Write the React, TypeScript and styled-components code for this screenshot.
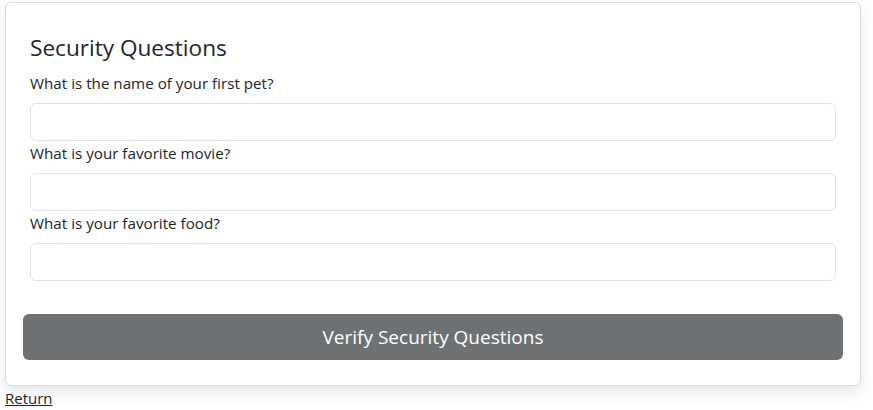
import React from "react";
import styled, { createGlobalStyle } from "styled-components";

const Global = createGlobalStyle`
  html, body { margin: 0; padding: 0; background: #fff; }
  body {
    font-family: "Open Sans", "Noto Sans", sans-serif;
    color: #212529;
    font-size: 15px;
  }
`;

const Page = styled.div`
  padding: 2px 12px 0 5px;
  display: flex;
  flex-direction: column;
  align-items: stretch;
`;

const Card = styled.div`
  border: 1px solid #dcdcdc;
  border-radius: 6px;
  background: #fff;
  box-shadow: 0 6px 14px rgba(0, 0, 0, 0.1);
  display: flex;
  flex-direction: column;
  padding: 0 17px 25px 17px;
`;

const Body = styled.div`
  padding: 30px 7px 0 7px;
  display: flex;
  flex-direction: column;
`;

const Title = styled.h4`
  margin: 0 0 9px 0;
  font-size: 22.6px;
  font-weight: 400;
  line-height: 29px;
`;

const Label = styled.label`
  display: block;
  font-size: 15.2px;
  line-height: 24px;
  margin-bottom: 8px;
`;

const Input = styled.input<{ $last?: boolean }>`
  display: block;
  box-sizing: border-box;
  width: 100%;
  height: 38px;
  border: 1px solid #dee2e6;
  border-radius: 6px;
  padding: 6px 12px;
  font: inherit;
  margin: 0 0 ${(p) => (p.$last ? "33px" : "0")} 0;
  outline: none;
`;

const Button = styled.button`
  height: 46px;
  border: none;
  border-radius: 6px;
  background: #6d7174;
  color: #fff;
  font-family: inherit;
  font-size: 19px;
  cursor: pointer;
`;

const ReturnLink = styled.a`
  color: #212529;
  text-decoration: underline;
  font-size: 15px;
  line-height: 22px;
  margin-top: 1px;
  align-self: flex-start;
`;

const questions = [
  "What is the name of your first pet?",
  "What is your favorite movie?",
  "What is your favorite food?",
];

export default function App() {
  return (
    <>
      <Global />
      <Page>
        <Card>
          <Body>
            <Title>Security Questions</Title>
            {questions.map((q, i) => (
              <React.Fragment key={q}>
                <Label>{q}</Label>
                <Input type="text" $last={i === questions.length - 1} />
              </React.Fragment>
            ))}
          </Body>
          <Button>Verify Security Questions</Button>
        </Card>
        <ReturnLink href="#">Return</ReturnLink>
      </Page>
    </>
  );
}
